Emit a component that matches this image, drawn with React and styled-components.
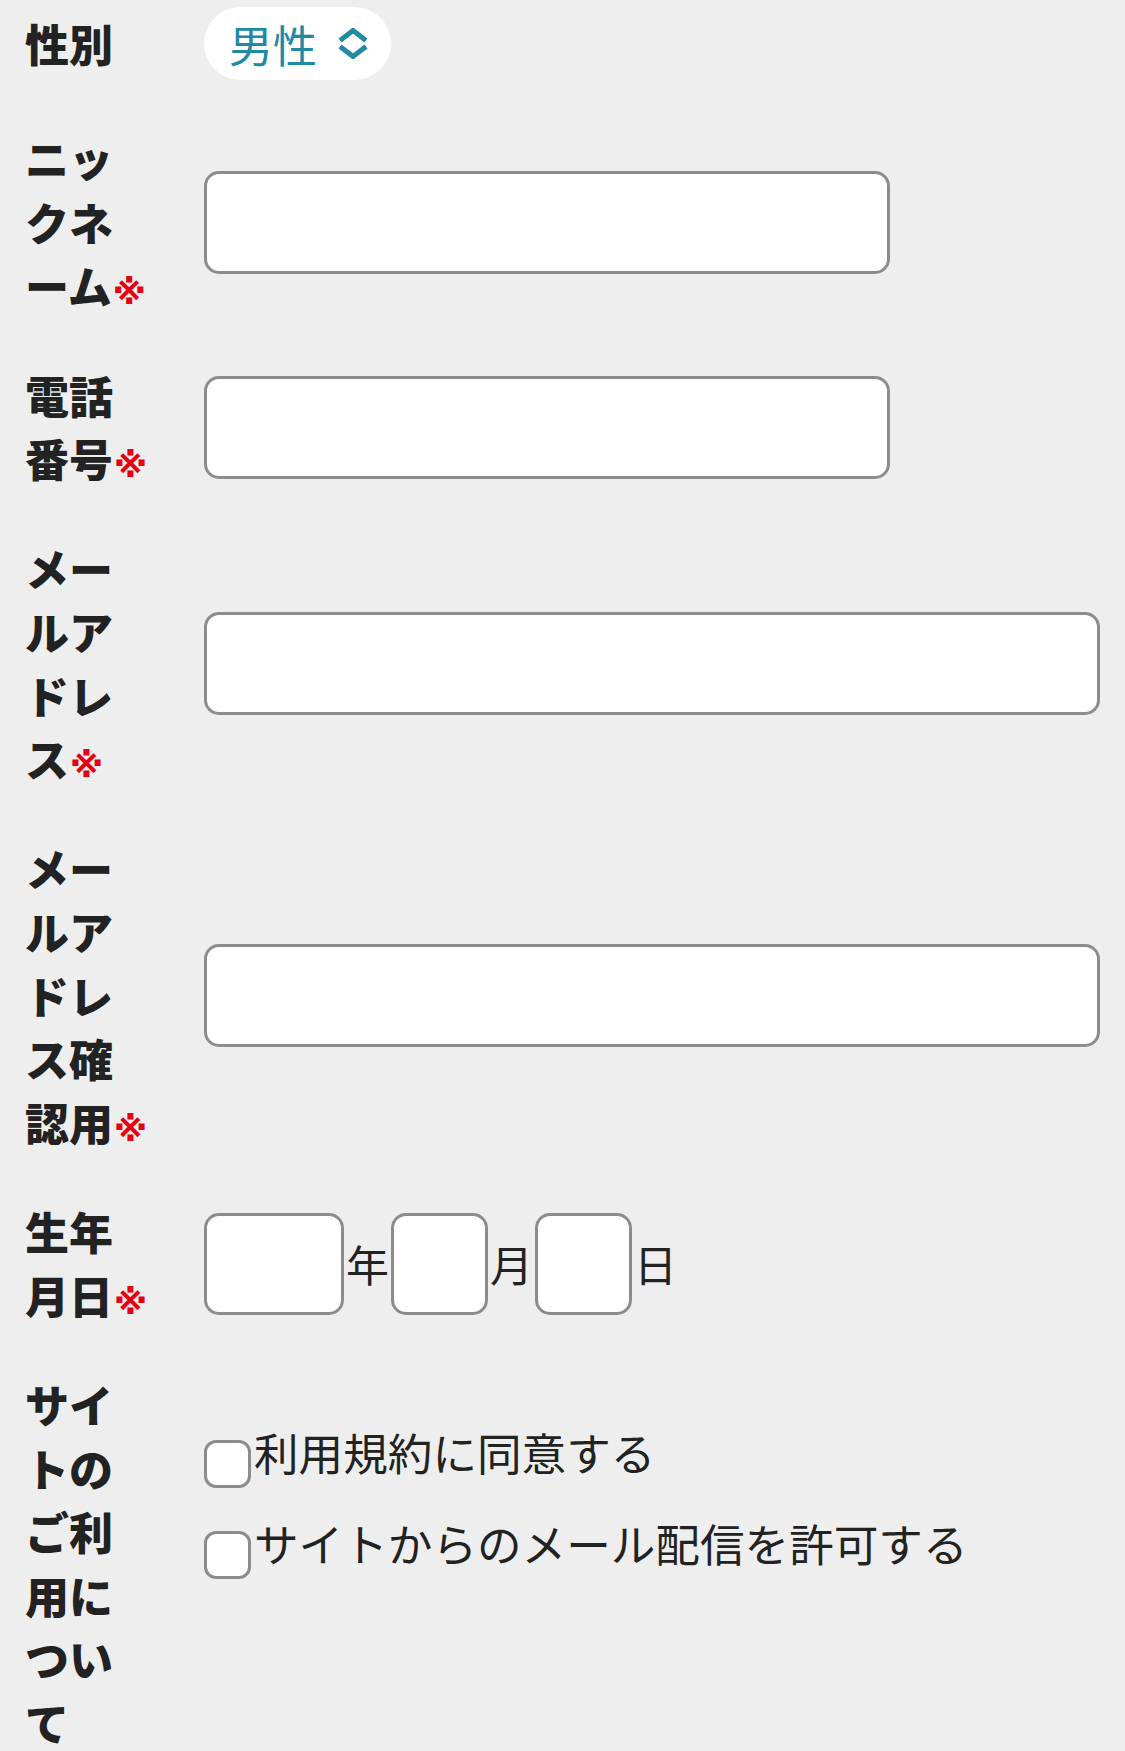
import React from "react";
import styled, { createGlobalStyle } from "styled-components";

const Global = createGlobalStyle`
  html, body { margin: 0; padding: 0; background: #eeeeee; }
  body { font-family: "Noto Sans CJK JP", "Noto Sans", sans-serif; color: #222; }
`;

const Page = styled.div`
  display: flex;
  flex-direction: column;
  gap: 46px;
  padding: 6px 25px 0 25px;
  min-height: 1751px;
  box-sizing: border-box;
`;

const Row = styled.div`
  display: flex;
  align-items: center;
  min-height: ${(p) => p.$min || 0}px;
`;

const Label = styled.div`
  flex: 0 0 125px;
  width: 125px;
  margin-right: 54px;
  font-size: 44px;
  font-weight: 900;
  line-height: 63.5px;
  color: #222;
  line-break: loose;
  word-break: break-all;
`;

const Req = styled.span`
  font-family: "DejaVu Sans", "Noto Sans CJK JP", sans-serif;
  font-size: 34px;
  line-height: 0;
  color: #e60012;
  font-weight: 700;
  margin-left: 1px;
`;

const Select = styled.div`
  display: inline-flex;
  align-items: center;
  height: 73px;
  padding: 0 22px 0 25px;
  border-radius: 37px;
  background: #fff;
  color: #2189a3;
  font-size: 44px;
  line-height: 1;
  box-sizing: border-box;
`;

const Chevron = styled.svg`
  width: 32px;
  height: 31px;
  margin-left: 20px;
`;

const TextInput = styled.input`
  box-sizing: border-box;
  width: ${(p) => p.$w}px;
  height: 103px;
  border: 3px solid #8c8c8c;
  border-radius: 15px;
  background: #fff;
  outline: none;
  font-size: 40px;
  padding: 0 16px;
`;

const DateWrap = styled.div`
  display: flex;
  align-items: center;
`;

const DateBox = styled.input`
  box-sizing: border-box;
  width: ${(p) => p.$w}px;
  height: 102px;
  border: 3px solid #8c8c8c;
  border-radius: 15px;
  background: #fff;
  outline: none;
  padding: 0;
`;

const Unit = styled.span`
  font-size: 43px;
  line-height: 1;
  margin: 0 2px 0 2px;
  color: #222;
`;

const Checks = styled.div`
  align-self: flex-start;
  padding-top: 47px;
  display: flex;
  flex-direction: column;
  gap: 23px;
`;

const CheckItem = styled.label`
  display: flex;
  align-items: flex-start;
  font-size: 44.6px;
  line-height: 64px;
  color: #222;
  white-space: nowrap;
`;

const Box = styled.span`
  flex: 0 0 auto;
  box-sizing: border-box;
  width: 47px;
  height: 48px;
  margin-top: 20px;
  margin-right: 3px;
  border: 3px solid #8c8c8c;
  border-radius: 12px;
  background: #fff;
`;

function Lbl({ text, req }) {
  return (
    <Label>
      {text}
      {req && <Req>※</Req>}
    </Label>
  );
}

export default function App() {
  return (
    <>
      <Global />
      <Page>
        <Row $min={75}>
          <Lbl text="性別" />
          <Select>
            男性
            <Chevron viewBox="0 0 32 31" fill="none" stroke="#2189a3" strokeWidth="5" strokeLinecap="square">
              <polyline points="5,11 16,2.5 27,11" />
              <polyline points="5,20 16,28.5 27,20" />
            </Chevron>
          </Select>
        </Row>
        <Row>
          <Lbl text="ニックネーム" req />
          <TextInput $w={686} />
        </Row>
        <Row>
          <Lbl text="電話番号" req />
          <TextInput $w={686} />
        </Row>
        <Row>
          <Lbl text="メールアドレス" req />
          <TextInput $w={896} />
        </Row>
        <Row>
          <Lbl text="メールアドレス確認用" req />
          <TextInput $w={896} />
        </Row>
        <Row>
          <Lbl text="生年月日" req />
          <DateWrap>
            <DateBox $w={140} />
            <Unit>年</Unit>
            <DateBox $w={97} />
            <Unit>月</Unit>
            <DateBox $w={97} />
            <Unit>日</Unit>
          </DateWrap>
        </Row>
        <Row>
          <Lbl text="サイトのご利用について" />
          <Checks>
            <CheckItem>
              <Box />
              利用規約に同意する
            </CheckItem>
            <CheckItem>
              <Box />
              サイトからのメール配信を許可する
            </CheckItem>
          </Checks>
        </Row>
      </Page>
    </>
  );
}
